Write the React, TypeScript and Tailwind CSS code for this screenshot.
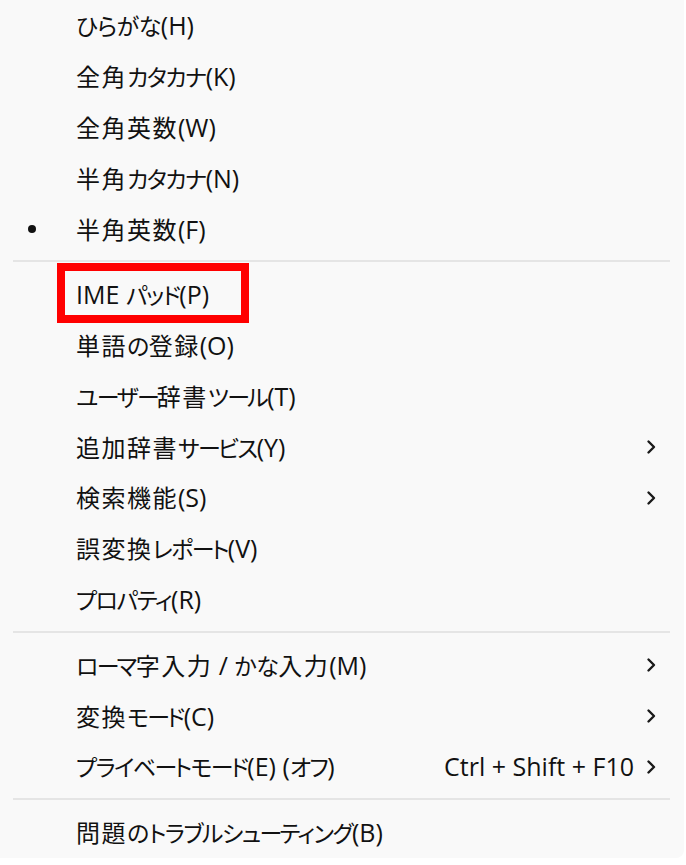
import React from "react";

type Item = { label: string; bullet?: boolean; sub?: boolean; shortcut?: string; boxed?: boolean };

const groups: Item[][] = [
  [
    { label: "ひらがな(H)" },
    { label: "全角カタカナ(K)" },
    { label: "全角英数(W)" },
    { label: "半角カタカナ(N)" },
    { label: "半角英数(F)", bullet: true },
  ],
  [
    { label: "IME パッド(P)", boxed: true },
    { label: "単語の登録(O)" },
    { label: "ユーザー辞書ツール(T)" },
    { label: "追加辞書サービス(Y)", sub: true },
    { label: "検索機能(S)", sub: true },
    { label: "誤変換レポート(V)" },
    { label: "プロパティ(R)" },
  ],
  [
    { label: "ローマ字入力 / かな入力(M)", sub: true },
    { label: "変換モード(C)", sub: true },
    { label: "プライベートモード(E) (オフ)", sub: true, shortcut: "Ctrl + Shift + F10" },
  ],
  [{ label: "問題のトラブルシューティング(B)" }],
];

type Kind = "kanji" | "hira" | "kata" | "bar" | "latin";

function kindOf(ch: string): Kind {
  const c = ch.charCodeAt(0);
  if (ch === "ー") return "bar";
  if (c >= 0x4e00 && c <= 0x9fff) return "kanji";
  if (c >= 0x3040 && c <= 0x309f) return "hira";
  if (c >= 0x30a0 && c <= 0x30ff) return "kata";
  return "latin";
}

const kindClass: Record<Kind, string> = {
  kanji: "text-[24px] tracking-[1.5px]",
  hira: "text-[23px] tracking-[-0.5px]",
  kata: "text-[23px] tracking-[-1.5px]",
  bar: "text-[23px] tracking-[-3px]",
  latin: "text-[25px]",
};

function Label({ text }: { text: string }) {
  const runs: { k: Kind; s: string }[] = [];
  for (const ch of Array.from(text)) {
    const k = kindOf(ch);
    const last = runs[runs.length - 1];
    if (last && last.k === k) last.s += ch;
    else runs.push({ k, s: ch });
  }
  return (
    <span className="whitespace-pre">
      {runs.map((r, i) => (
        <span key={i} className={kindClass[r.k]}>
          {r.s}
        </span>
      ))}
    </span>
  );
}

function Chevron() {
  return (
    <svg width="10" height="16" viewBox="0 0 10 16" className="block">
      <path d="M2.5 2.5 L8 8 L2.5 13.5" fill="none" stroke="#1a1a1a" strokeWidth="2.4" strokeLinecap="round" strokeLinejoin="round" />
    </svg>
  );
}

function Row({ item }: { item: Item }) {
  return (
    <div className="relative flex h-[50.9px] items-center">
      {item.boxed && (
        <div className="absolute left-[57px] top-[-6px] h-[60px] w-[192px] border-[8px] border-[#ff0000]" />
      )}
      <div className="flex w-[76px] shrink-0 items-center">
        {item.bullet && <div className="ml-[28px] h-[8px] w-[8px] rounded-full bg-[#111111]" />}
      </div>
      <div className="relative flex-1 leading-none">
        <Label text={item.label} />
      </div>
      {item.shortcut && <span className="mr-[12px] text-[25px] leading-none">{item.shortcut}</span>}
      <div className="flex w-[38px] shrink-0 items-center">{item.sub && <Chevron />}</div>
    </div>
  );
}

export default function App() {
  return (
    <div className="min-h-[865px] w-[686px] bg-white">
      <div
        className="h-[858px] w-[684px] rounded-br-[8px] bg-[#f9f9f9] text-[25px] text-[#111111]"
        style={{ fontFamily: '"Open Sans", "Noto Sans CJK JP", sans-serif', fontFeatureSettings: '"palt"' }}
      >
        {groups.map((g, gi) => (
          <div key={gi}>
            {gi > 0 && (
              <div className="pb-[7px] pl-[13px] pr-[14px] pt-[5.5px]">
                <div className="h-[2px] bg-[#e5e5e5]" />
              </div>
            )}
            {g.map((it, i) => (
              <Row key={i} item={it} />
            ))}
          </div>
        ))}
      </div>
    </div>
  );
}
